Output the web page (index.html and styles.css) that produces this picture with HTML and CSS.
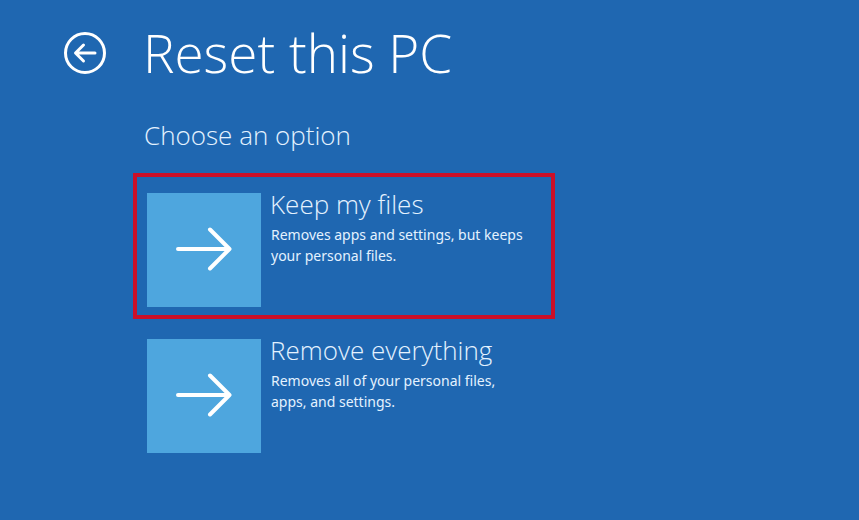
FILE: index.html
```html
<!DOCTYPE html>
<html lang="en">
<head>
<meta charset="utf-8">
<title>Reset this PC</title>
<link rel="stylesheet" href="styles.css">
</head>
<body>
<main class="page">
  <header class="header">
    <button class="back" type="button" aria-label="Back">
      <svg viewBox="0 0 44 44" aria-hidden="true">
        <circle cx="22" cy="22" r="19.500"/>
        <path d="M32 22H13M20.500 14L12.500 22L20.500 30"/>
      </svg>
    </button>
    <h1 class="title">Reset this PC</h1>
  </header>
  <section class="content">
    <h2 class="subtitle">Choose an option</h2>
    <div class="options">
      <button class="option option-marked" type="button">
        <span class="tile">
          <svg viewBox="0 0 56 44" aria-hidden="true"><path d="M2 22H53M34 2.500L53.500 22L34 41.500"/></svg>
        </span>
        <span class="text">
          <span class="name">Keep my files</span>
          <span class="description">Removes apps and settings, but keeps<br>your personal files.</span>
        </span>
      </button>
      <button class="option" type="button">
        <span class="tile">
          <svg viewBox="0 0 56 44" aria-hidden="true"><path d="M2 22H53M34 2.500L53.500 22L34 41.500"/></svg>
        </span>
        <span class="text">
          <span class="name">Remove everything</span>
          <span class="description">Removes all of your personal files,<br>apps, and settings.</span>
        </span>
      </button>
    </div>
  </section>
</main>
</body>
</html>
```
FILE: styles.css
```css
* {
  box-sizing: border-box;
}

body {
  margin: 0;
  min-height: 100vh;
  background: #1f67b1;
  color: #fff;
  font-family: "Segoe UI", "Open Sans", "Noto Sans", sans-serif;
}

.page {
  padding: 19px 63px 48px;
}

.header {
  display: flex;
  align-items: center;
  gap: 36px;
}

.back {
  width: 44px;
  height: 44px;
  padding: 0;
  border: 0;
  background: none;
  color: inherit;
}

svg {
  display: block;
  width: 100%;
  fill: none;
  stroke: currentColor;
  stroke-width: 3;
  stroke-linecap: round;
  stroke-linejoin: round;
}

.title {
  margin: 0;
  font-size: 53px;
  font-weight: 300;
  line-height: 68px;
}

.content {
  padding-left: 70px;
}

.subtitle {
  margin: 30px 0 20px;
  padding-left: 11px;
  color: #e4f2ff;
  font-size: 26px;
  font-weight: 300;
  line-height: 36px;
}

.options {
  display: flex;
  flex-direction: column;
  align-items: flex-start;
}

.option {
  display: flex;
  gap: 9px;
  width: 422px;
  max-width: 100%;
  padding: 16px 10px 8px;
  border: 4px solid transparent;
  background: none;
  color: inherit;
  font-family: inherit;
  text-align: left;
}

.option-marked {
  border-color: #cc1028;
}

.tile {
  display: flex;
  flex: none;
  align-items: center;
  justify-content: center;
  width: 114px;
  height: 114px;
  padding-bottom: 2px;
  background: #4ea6de;
}

.tile svg {
  width: 56px;
  stroke-width: 4;
}

.text {
  display: flex;
  flex-direction: column;
  gap: 2px;
  margin-top: -7px;
  color: #e4f2ff;
}

.name {
  font-size: 26px;
  font-weight: 300;
  line-height: 36px;
}

.description {
  padding-left: 1px;
  font-family: "Segoe UI", "Noto Sans", "Open Sans", sans-serif;
  font-size: 14px;
  line-height: 21px;
}
```
